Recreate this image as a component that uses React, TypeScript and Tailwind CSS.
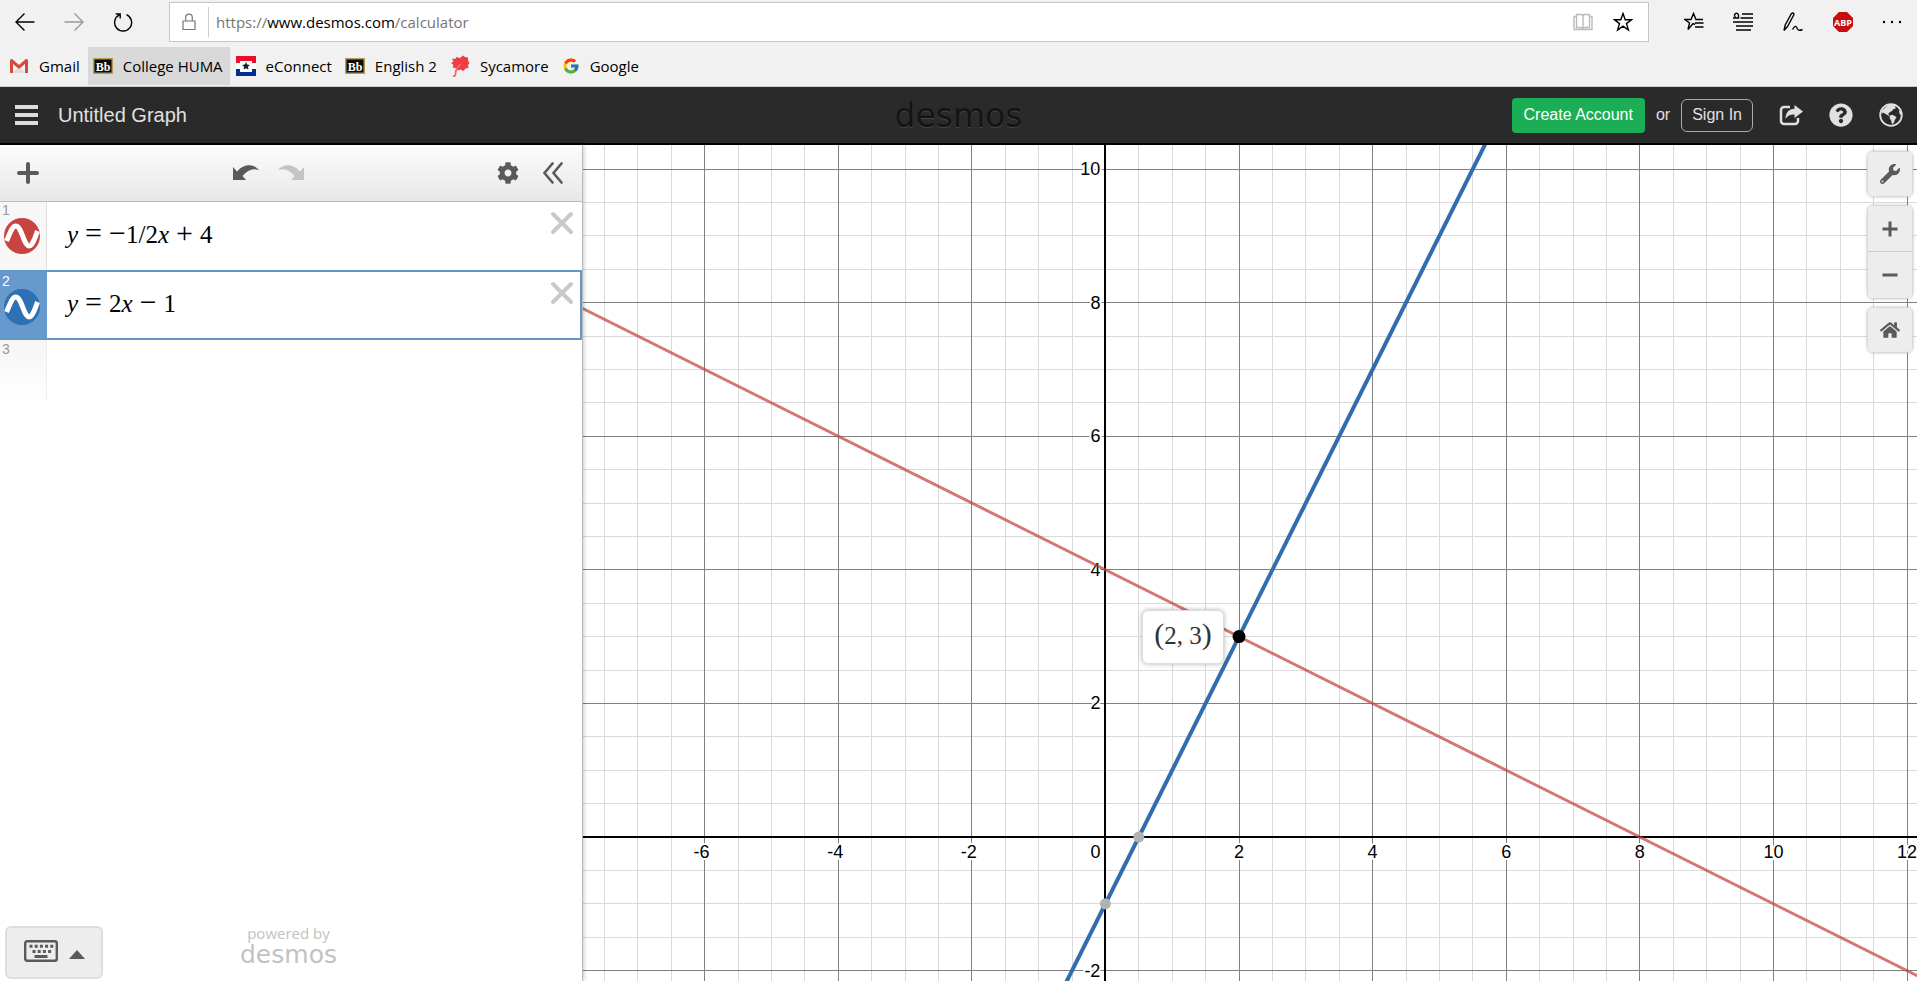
import type { ReactNode } from "react";
import { FaCog, FaHome, FaQuestionCircle, FaWrench } from "react-icons/fa";
import { FcGoogle } from "react-icons/fc";

const UNIT = 66.8;
const ORIGIN = { x: 522.4, y: 692 };

const toX = (x: number) => ORIGIN.x + x * UNIT;
const toY = (y: number) => ORIGIN.y - y * UNIT;
const snap = (value: number) => Math.floor(value) + 0.5;

const halfSteps = Array.from({ length: 121 }, (_, i) => (i - 60) / 2);
const minorSteps = halfSteps.filter((n) => n % 2 !== 0);
const majorSteps = halfSteps.filter((n) => n % 2 === 0);
const xLabels = [-6, -4, -2, 2, 4, 6, 8, 10, 12];
const yLabels = [10, 8, 6, 4, 2, -2];

function BlackboardIcon() {
  return (
    <svg viewBox="0 0 20 16" className="h-4 w-5">
      <rect width="20" height="16" fill="#b59a55" />
      <rect x="1.5" y="1.5" width="17" height="13" fill="#0b0b0b" />
      <text x="10" y="12.5" textAnchor="middle" fontSize="12" fontWeight="700" fill="#fff" fontFamily="Liberation Serif, serif">
        Bb
      </text>
    </svg>
  );
}

function GmailIcon() {
  return (
    <svg viewBox="0 0 20 16" className="h-4 w-5">
      <path d="M3 2h14v13H3z" fill="#f4f4f4" />
      <path d="M3 15 10 9l7 6z" fill="#dedede" />
      <path d="M2.5 15V2.5L10 9l7.5-6.5V15" fill="none" stroke="#d54b3d" strokeWidth="3" strokeLinejoin="round" />
    </svg>
  );
}

function ConnectIcon() {
  return (
    <svg viewBox="0 0 20 20" className="size-5">
      <path d="M0 0h20v10H0z" fill="#e8112d" />
      <path d="M0 10h20v10H0z" fill="#00308f" />
      <path d="M0 7h4V5h12v2h4v6h-4v3H4v-3H0z" fill="#fff" />
      <path d="m10 6 1.2 2.6 2.8.3-2.1 1.9.6 2.8-2.5-1.4-2.5 1.4.6-2.8L6 8.9l2.8-.3z" fill="#14233c" />
    </svg>
  );
}

function SycamoreIcon() {
  return (
    <svg viewBox="0 0 20 22" className="h-[22px] w-5">
      <path
        d="m6 2 4 1 3-2.500 2 1.500 3 .5v3l1.500 2.500-1.500 2 .5 3-3 .5-2 2.500-3-1.500-2.500 1L6 13l-3.500-.5L3.500 10 1 8l2.500-1.500L2 3.500 5.500 4z"
        fill="#ee3b45"
      />
      <path d="M11 9c-3 2-5.500 6-5.500 10.500Q5 21.500 3 21" fill="none" stroke="#f0666c" strokeWidth="1.8" />
    </svg>
  );
}

const bookmarks: { label: string; icon: ReactNode; active?: boolean }[] = [
  { label: "Gmail", icon: <GmailIcon /> },
  { label: "College HUMA", icon: <BlackboardIcon />, active: true },
  { label: "eConnect", icon: <ConnectIcon /> },
  { label: "English 2", icon: <BlackboardIcon /> },
  { label: "Sycamore", icon: <SycamoreIcon /> },
  { label: "Google", icon: <FcGoogle className="size-[18px]" /> },
];

function IconButton({ label, children }: { label: string; children: ReactNode }) {
  return (
    <button type="button" aria-label={label} className="flex items-center justify-center">
      {children}
    </button>
  );
}

function StrokeIcon({ children, className = "" }: { children: ReactNode; className?: string }) {
  return (
    <svg viewBox="0 0 20 20" fill="none" stroke="currentColor" strokeWidth="1.4" className={`size-5 ${className}`}>
      {children}
    </svg>
  );
}

const STAR = "m10 1.5 2.2 6.2h6.3l-5 3.9 1.9 6.4-5.4-3.9L4.6 18l1.9-6.4-5-3.9h6.3z";

function BrowserBar() {
  return (
    <div className="bg-[#f1f1f1] font-['Open_Sans','Noto_Sans',sans-serif] text-black">
      <div className="flex h-[42px] items-center pt-px">
        <div className="grid h-full w-[148px] shrink-0 grid-cols-3">
          <IconButton label="Back">
            <StrokeIcon>
              <path d="M19.5 10H1M9.5 1.5 1 10l8.5 8.5" />
            </StrokeIcon>
          </IconButton>
          <IconButton label="Forward">
            <StrokeIcon className="text-[#999]">
              <path d="M.5 10H19M10.5 1.5 19 10l-8.5 8.5" />
            </StrokeIcon>
          </IconButton>
          <IconButton label="Refresh">
            <StrokeIcon>
              <path d="M13.5 2.7a8.5 8.5 0 1 1-7.2.2M7.2 6.5V2H2.7" />
            </StrokeIcon>
          </IconButton>
        </div>
        <div className="ml-[21px] flex h-10 flex-1 items-center border border-[#c6c6c6] bg-white">
          <svg viewBox="0 0 14 18" className="ml-3 h-[18px] w-[14px]" fill="none" stroke="#777" strokeWidth="1.2">
            <path d="M1 8h12v8.5H1zM3.7 8V4.500a3.300 3.300 0 0 1 6.600 0V8" />
          </svg>
          <span className="ml-3 h-[30px] w-px bg-[#ccc]" />
          <div
            role="textbox"
            aria-label="Address"
            contentEditable
            suppressContentEditableWarning
            className="ml-[7px] flex-1 pt-px text-[15px] text-[#757575]"
          >
            https://<span className="text-black">www.desmos.com</span>/calculator
          </div>
          <button type="button" aria-label="Reading view">
            <StrokeIcon className="text-[#bbb]">
              <path d="M10 3.5v14M3.5 2.5H8q2 0 2 1.5 0-1.5 2-1.5h4.500v13H12q-2 0-2 1.500 0-1.500-2-1.500H3.500zM3.500 4.500H1v13h18v-13h-2.500" />
            </StrokeIcon>
          </button>
          <button type="button" aria-label="Add to favorites" className="mr-[15px] ml-5">
            <StrokeIcon>
              <path d={STAR} />
            </StrokeIcon>
          </button>
        </div>
        <div className="ml-5 grid h-full w-[248px] shrink-0 grid-cols-5">
          <IconButton label="Favorites">
            <StrokeIcon>
              <path d="M11 12.5 9 11.500l-5 6 1.500-6.500L.8 7.500H7l2.500-6L12 7.500h7M11 11h8.500M11 15h8.500" />
            </StrokeIcon>
          </IconButton>
          <IconButton label="Reading list">
            <StrokeIcon>
              <path d="M9 2h11M7.5 6H20M0 10h20M3 14h17M3 18h15M0 6h5.500V3.500A2 2 0 1 0 2.500 5" />
            </StrokeIcon>
          </IconButton>
          <IconButton label="Web notes">
            <StrokeIcon>
              <path d="M1 18.500 2.200 13 8.500 1.500q2-1.500 2.500 1L4.500 14.500zM9.500 17.500c3-5 4-3 5-.5 1 2 3 1.500 5 .5" />
            </StrokeIcon>
          </IconButton>
          <IconButton label="Adblock Plus">
            <svg viewBox="0 0 20 20" className="size-5">
              <path d="M6 0h8l6 6v8l-6 6H6l-6-6V6z" fill="#c70d0d" />
              <text x="10" y="13.500" textAnchor="middle" fontSize="9" fontWeight="700" fill="#fff">
                ABP
              </text>
            </svg>
          </IconButton>
          <IconButton label="More">
            <svg viewBox="0 0 20 20" className="size-5">
              <circle cx="2" cy="10" r="1.2" />
              <circle cx="10" cy="10" r="1.2" />
              <circle cx="18" cy="10" r="1.2" />
            </svg>
          </IconButton>
        </div>
      </div>
      <nav className="flex h-[45px] items-center border-b border-[#c9c9c9] pt-[5px] pb-px pl-1">
        {bookmarks.map(({ label, icon, active }) => (
          <a
            key={label}
            href="#"
            className={`mr-px flex h-full items-center gap-[10px] pr-[7px] pl-[5px] text-[15px] ${active ? "bg-[#d9d9d9]" : ""}`}
          >
            {icon}
            {label}
          </a>
        ))}
      </nav>
    </div>
  );
}

function Header() {
  return (
    <header className="grid h-[58px] grid-cols-[1fr_auto_1fr] items-center border-b-2 border-black bg-[#2a2a2a] text-[#e0e0e0]">
      <div className="flex items-center pl-[15px]">
        <button type="button" aria-label="Open graph menu" className="flex w-[23px] flex-col gap-1">
          <span className="h-1 bg-[#ddd]" />
          <span className="h-1 bg-[#ddd]" />
          <span className="h-1 bg-[#ddd]" />
        </button>
        <h1 className="ml-5 text-xl">Untitled Graph</h1>
      </div>
      <div className="font-['DejaVu_Sans',sans-serif] text-[33px] leading-none text-[#141414] [text-shadow:0_1px_0_#444]">
        desmos
      </div>
      <div className="flex items-center justify-end pr-[14px]">
        <button type="button" className="h-[35px] rounded bg-[#1bae55] px-3 text-white">
          Create Account
        </button>
        <span className="mx-[11px]">or</span>
        <button type="button" className="h-[33px] rounded-md border border-[#aaa] px-[10px]">
          Sign In
        </button>
        <button type="button" aria-label="Share graph" className="ml-[26px]">
          <svg viewBox="0 0 24 22" className="h-[22px] w-6">
            <path d="M11 3H5a3 3 0 0 0-3 3v11a3 3 0 0 0 3 3h11a3 3 0 0 0 3-3v-3" fill="none" stroke="currentColor" strokeWidth="2.5" />
            <path d="M15.500 1 24 7.500 15.500 14v-3.500c-4-.2-7 .8-9 4.500 0-6.500 3.500-10 9-10.200z" fill="currentColor" />
          </svg>
        </button>
        <button type="button" aria-label="Help" className="ml-[26px]">
          <FaQuestionCircle className="size-6" />
        </button>
        <button type="button" aria-label="Language" className="ml-[26px]">
          <svg viewBox="0 0 24 24" className="size-6">
            <circle cx="12" cy="12" r="10.8" fill="none" stroke="currentColor" strokeWidth="1.800" />
            <path
              d="M9 2l4-.8 4 1.300-1 1.500 1 1.500-2.500.5L13 8l-2 1-2 2 1.500 1-.5 1-2.500-1.500L4 9.500l-1 1.500-.5-3zM11 12.500l2-.8 3 1.300 1.500 1.500-1.500 2-1 3-2 2-.8-4L10.500 15zM20 7l2 2 .5 3-2-1z"
              fill="currentColor"
            />
          </svg>
        </button>
      </div>
    </header>
  );
}

function CurvedArrow({ className = "" }: { className?: string }) {
  return (
    <svg viewBox="0 0 26 16" className={`h-4 w-[26px] ${className}`} fill="currentColor">
      <path d="M0 2 4 6.500C8 1.500 13 0 17 .2c4 .3 7 2.300 9 5C20 3 15 4.500 9.500 11L13 15H0z" />
    </svg>
  );
}

function WaveBadge({ color }: { color: string }) {
  return (
    <svg viewBox="0 0 36 36" className="size-9">
      <circle cx="18" cy="18" r="18" fill={color} />
      <path
        d="M2.500 23C4.500 19 6 14 8 11c2.500-4 5-4 7.500 0 2 3 4.500 11.500 6.500 14.500 2.500 3.500 4.500 3 6.500-.5 2-3 3.500-8 5-12"
        fill="none"
        stroke="#fff"
        strokeWidth="5"
      />
    </svg>
  );
}

function CloseIcon() {
  return (
    <svg viewBox="0 0 24 24" className="size-6" stroke="#c9c9c9" strokeWidth="4" strokeLinecap="round">
      <path d="m3 3 18 18M21 3 3 21" />
    </svg>
  );
}

function Operator({ children }: { children: ReactNode }) {
  return <span className="text-[30px] leading-6">{children}</span>;
}

function Expression({ index, color, active = false, children }: { index: number; color: string; active?: boolean; children: ReactNode }) {
  return (
    <li className={`flex ${active ? "h-[70px] border-2 border-l-0 border-[#6596c8]" : "h-[68px]"}`}>
      <button
        type="button"
        aria-label={`Hide expression ${index}`}
        className={`flex w-[47px] shrink-0 flex-col text-left ${active ? "bg-[#6699cc] pt-px text-white" : "border-r border-[#ddd] bg-[#f7f7f7] text-[#999]"}`}
      >
        <span className="pl-[2px] text-sm leading-4">{index}</span>
        <span className="pl-1">
          <WaveBadge color={color} />
        </span>
      </button>
      <div
        role="textbox"
        aria-label={`Expression ${index}`}
        contentEditable
        suppressContentEditableWarning
        className="flex flex-1 items-center pb-[2px] pl-5 font-['Liberation_Serif',serif] text-[25px] text-black"
      >
        <div className="flex items-baseline gap-[7px]">{children}</div>
      </div>
      <button type="button" aria-label={`Delete expression ${index}`} className={`self-start pt-[9px] ${active ? "mr-[6px]" : "mr-2"}`}>
        <CloseIcon />
      </button>
    </li>
  );
}

function ExpressionPanel() {
  return (
    <aside className="z-10 flex w-[583px] shrink-0 flex-col border-r border-[#bbb] bg-white shadow-[0_0_5px_rgba(0,0,0,0.3)]">
      <div className="flex h-[57px] items-center border-b border-[#bbb] bg-linear-to-b from-[#fcfcfc] to-[#e8e8e8] pr-[19px] pl-[17px] text-[#5a5a5a]">
        <button type="button" aria-label="Add item">
          <svg viewBox="0 0 22 22" className="size-[22px]" stroke="currentColor" strokeWidth="4" strokeLinecap="round">
            <path d="M11 2v18M2 11h18" />
          </svg>
        </button>
        <div className="flex flex-1 justify-center gap-[19px]">
          <button type="button" aria-label="Undo">
            <CurvedArrow />
          </button>
          <button type="button" aria-label="Redo" className="text-[#c4c4c4]">
            <CurvedArrow className="-scale-x-100" />
          </button>
        </div>
        <button type="button" aria-label="Edit list">
          <FaCog className="size-[22px]" />
        </button>
        <button type="button" aria-label="Hide expression list" className="ml-6">
          <svg viewBox="0 0 20 22" className="h-[22px] w-5" fill="none" stroke="currentColor" strokeWidth="2.6" strokeLinecap="round">
            <path d="m9.500 1.500-8 9.500 8 9.500M18.500 1.500l-8 9.500 8 9.500" />
          </svg>
        </button>
      </div>
      <ol>
        <Expression index={1} color="#c74440">
          <i>y</i>
          <Operator>=</Operator>
          <span>
            <Operator>−</Operator>1/2<i>x</i>
          </span>
          <Operator>+</Operator>
          <span>4</span>
        </Expression>
        <Expression index={2} color="#2d70b3" active>
          <i>y</i>
          <Operator>=</Operator>
          <span>
            2<i>x</i>
          </span>
          <Operator>−</Operator>
          <span>1</span>
        </Expression>
        <li className="flex h-[60px]">
          <label
            htmlFor="expression-3"
            className="w-[47px] shrink-0 border-r border-[#eee] bg-linear-to-b from-[#f5f5f5] to-white pt-px pl-[2px] text-sm leading-4 text-[#999]"
          >
            3
          </label>
          <input id="expression-3" className="flex-1 px-5 font-['Liberation_Serif',serif] text-[25px] outline-none" />
        </li>
      </ol>
      <footer className="mt-auto flex items-end pl-[5px]">
        <button
          type="button"
          aria-label="Show keypad"
          className="mb-[2px] flex h-[53px] w-[98px] items-center justify-center gap-[11px] rounded-md border-2 border-[#ddd] bg-[#ededed] text-[#5a5a5a]"
        >
          <svg viewBox="0 0 34 22" className="mb-1 h-[22px] w-[34px]">
            <rect x="1.2" y="1.2" width="31.6" height="19.6" rx="2" fill="none" stroke="currentColor" strokeWidth="2.4" />
            <path d="M5.500 6.300h24" stroke="currentColor" strokeWidth="3" strokeDasharray="3 2.2" />
            <path d="M8.500 11.500h19" stroke="currentColor" strokeWidth="3" strokeDasharray="3 2.2" />
            <path d="M10.500 16.500h13" stroke="currentColor" strokeWidth="3" />
          </svg>
          <svg viewBox="0 0 16 9" className="mt-1 h-[9px] w-4" fill="currentColor">
            <path d="m8 0 8 9H0z" />
          </svg>
        </button>
        <div className="mb-3 ml-[137px] text-center text-[#c2c2c2]">
          <p className="font-['Open_Sans',sans-serif] text-[15px] leading-4">powered by</p>
          <p className="font-['DejaVu_Sans',sans-serif] text-[25px] leading-7">desmos</p>
        </div>
      </footer>
    </aside>
  );
}

function GridLines({ steps, color }: { steps: number[]; color: string }) {
  return (
    <g stroke={color} shapeRendering="crispEdges">
      {steps.map((n) => (
        <g key={n}>
          <line x1={snap(toX(n))} x2={snap(toX(n))} y1="0" y2="100%" />
          <line x1="0" x2="100%" y1={snap(toY(n))} y2={snap(toY(n))} />
        </g>
      ))}
    </g>
  );
}

function Line({ slope, intercept, color, width, opacity = 1 }: { slope: number; intercept: number; color: string; width: number; opacity?: number }) {
  return (
    <line
      x1={toX(-30)}
      y1={toY(slope * -30 + intercept)}
      x2={toX(30)}
      y2={toY(slope * 30 + intercept)}
      stroke={color}
      strokeWidth={width}
      strokeOpacity={opacity}
    />
  );
}

const toolButton = "flex w-11 items-center justify-center bg-[#ededed] text-[#5a5a5a]";
const toolFrame = "overflow-hidden rounded-md border border-[#d8d8d8] shadow-[0_0_3px_rgba(0,0,0,0.25)]";

function Graph() {
  return (
    <main className="relative min-w-0 flex-1 overflow-hidden bg-white">
      <svg className="absolute inset-0 size-full" role="img" aria-label="Graph of two lines crossing at (2, 3)">
        <GridLines steps={minorSteps} color="#dadada" />
        <GridLines steps={majorSteps} color="#808080" />
        <g stroke="#000" strokeWidth="2" shapeRendering="crispEdges">
          <line x1={toX(0)} x2={toX(0)} y1="0" y2="100%" />
          <line x1="0" x2="100%" y1={toY(0)} y2={toY(0)} />
        </g>
        <g fontSize="18" fill="#000" stroke="#fff" strokeWidth="4" strokeLinejoin="round" paintOrder="stroke">
          {xLabels.map((n) => (
            <text key={n} x={toX(n) - (n < 0 ? 3 : 0)} y={toY(0) + 21} textAnchor="middle">
              {n}
            </text>
          ))}
          {yLabels.map((n) => (
            <text key={n} x={toX(0) - 5} y={toY(n) + 6} textAnchor="end">
              {n}
            </text>
          ))}
          <text x={toX(0) - 5} y={toY(0) + 21} textAnchor="end">
            0
          </text>
        </g>
        <Line slope={-0.5} intercept={4} color="#c0443f" width={3} opacity={0.72} />
        <Line slope={2} intercept={-1} color="#326ead" width={4} />
        <circle cx={toX(0.5)} cy={toY(0)} r="5.500" fill="#b0b3b5" />
        <circle cx={toX(0)} cy={toY(-1)} r="5.500" fill="#b0b3b5" />
        <circle cx={toX(2)} cy={toY(3)} r="6.500" fill="#000" />
      </svg>
      <div
        className="absolute flex h-[54px] w-[82px] items-center justify-center rounded-md border border-[#ddd] bg-white pb-[2px] font-['Liberation_Serif',serif] text-[25px] text-[#333] shadow-[0_0_5px_rgba(0,0,0,0.3)]"
        style={{ left: toX(2) - 97, top: toY(3) - 27 }}
      >
        <span>
          <Operator>(</Operator>2, 3<Operator>)</Operator>
        </span>
      </div>
      <div className="absolute top-[6px] right-1 flex flex-col gap-2">
        <div className={toolFrame}>
          <button type="button" aria-label="Graph settings" className={`${toolButton} h-11`}>
            <FaWrench className="size-5" />
          </button>
        </div>
        <div className={toolFrame}>
          <button type="button" aria-label="Zoom in" className={`${toolButton} h-[46px] border-b border-[#d0d0d0]`}>
            <svg viewBox="0 0 16 16" className="size-4" stroke="currentColor" strokeWidth="3">
              <path d="M8 .5v15M.5 8h15" />
            </svg>
          </button>
          <button type="button" aria-label="Zoom out" className={`${toolButton} h-[46px]`}>
            <svg viewBox="0 0 16 16" className="size-4" stroke="currentColor" strokeWidth="3">
              <path d="M.5 8h15" />
            </svg>
          </button>
        </div>
        <div className={toolFrame}>
          <button type="button" aria-label="Default viewport" className={`${toolButton} h-11`}>
            <FaHome className="size-5" />
          </button>
        </div>
      </div>
    </main>
  );
}

export default function App() {
  return (
    <div className="flex h-screen flex-col overflow-hidden font-['Liberation_Sans',Arial,sans-serif]">
      <BrowserBar />
      <Header />
      <div className="flex min-h-0 flex-1">
        <ExpressionPanel />
        <Graph />
      </div>
    </div>
  );
}
